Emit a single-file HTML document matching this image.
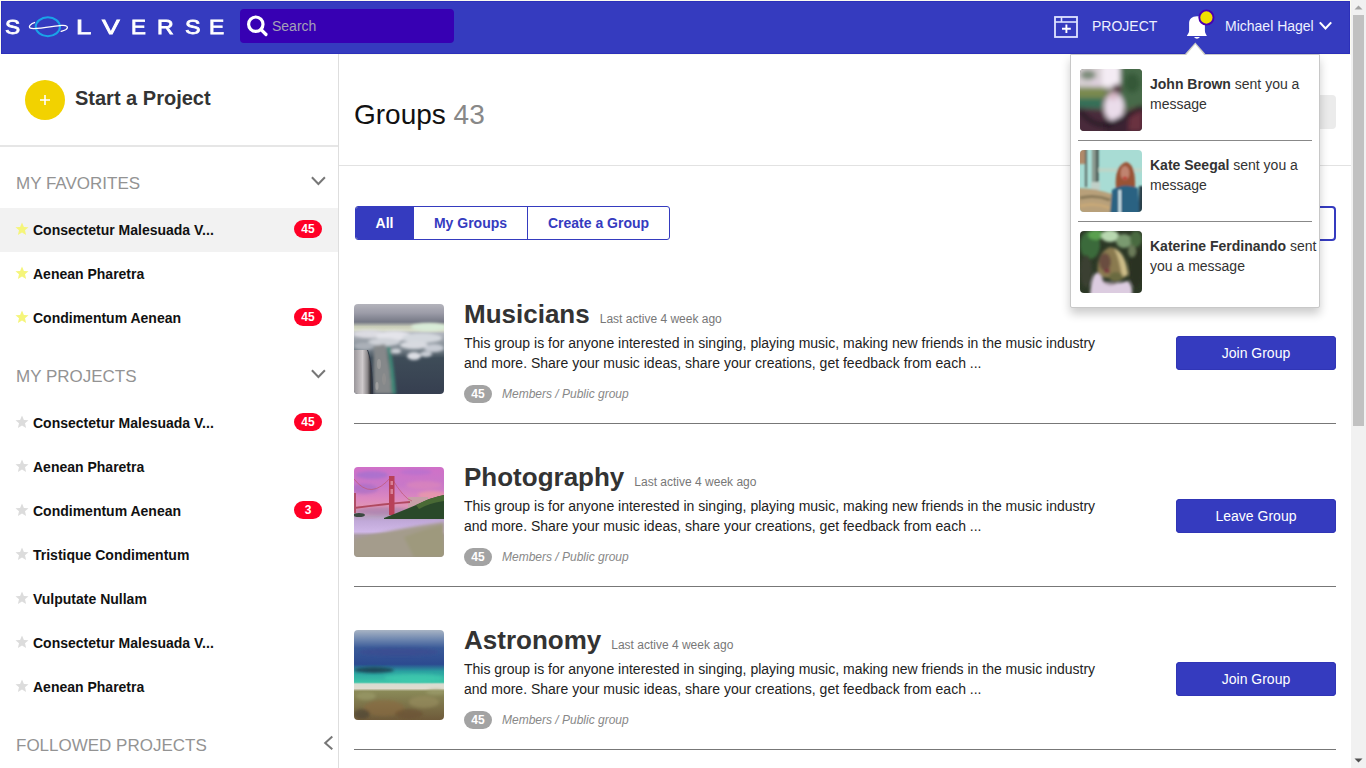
<!DOCTYPE html>
<html><head><meta charset="utf-8">
<style>
*{box-sizing:border-box;margin:0;padding:0}
html,body{width:1366px;height:768px;overflow:hidden;background:#fff;font-family:"Liberation Sans",sans-serif}
.abs{position:absolute}
#page{position:absolute;left:0;top:0;width:1351px;height:768px;background:#fff}
#hdr{position:absolute;left:1px;top:1px;width:1349px;height:53px;background:#353bbf;box-shadow:inset 0 0 0 1px #2c30ba,0 0 0 1px #fbfbf0}
.lg{position:absolute;top:11px;color:#fff;font-size:21px;line-height:30px;-webkit-text-stroke:0.8px #fff;transform-origin:0 0}
#search{position:absolute;left:239px;top:8px;width:214px;height:34px;background:#3700b3;border-radius:4px}
#search span{position:absolute;left:32px;top:9px;font-size:14px;color:#a4a2b6;line-height:16px}
#side{position:absolute;left:0;top:54px;width:339px;height:714px;border-right:1px solid #dedede;background:#fff}
.sect{position:absolute;left:16px;font-size:17px;color:#939393;line-height:20px}
.it{position:absolute;left:0;width:338px;height:44px}
.it .t{position:absolute;left:33px;top:14px;font-size:14px;font-weight:bold;color:#111;line-height:16px}
.it .st{position:absolute;left:15px;top:14px}
.bd{position:absolute;left:294px;top:12px;width:28px;height:18px;border-radius:9px;background:#ff0026;color:#fff;font-size:12px;font-weight:bold;text-align:center;line-height:18px}
#main{position:absolute;left:339px;top:54px;width:1012px;height:714px}
.grp{position:absolute;left:354px;width:982px;height:120px}
.img{position:absolute;left:0;top:0;width:90px;height:90px;border-radius:4px;overflow:hidden}
.gt{position:absolute;left:110px;font-size:26px;font-weight:bold;color:#333;line-height:30px;white-space:nowrap}
.gt small{font-size:12px;font-weight:normal;color:#777;margin-left:10px}
.gd{position:absolute;left:110px;top:29px;font-size:14px;color:#222;line-height:20px;width:645px}
.gb{position:absolute;left:110px;top:81px;width:28px;height:18px;border-radius:9px;background:#a3a3a3;color:#fff;font-size:12px;font-weight:bold;text-align:center;line-height:18px}
.gm{position:absolute;left:148px;top:82px;font-size:12px;font-style:italic;color:#888;line-height:16px}
.btn{position:absolute;left:822px;top:32px;width:160px;height:34px;background:#353bbf;border-radius:4px;box-shadow:inset 0 0 0 1px #3035b6;color:#fff;font-size:14px;text-align:center;line-height:34px}
.hr{position:absolute;left:354px;width:982px;height:1px;background:#777}
#pop{position:absolute;left:1070px;top:54px;width:250px;height:254px;background:#fff;border:1px solid #c8c8c8;border-radius:0 0 2px 2px;box-shadow:0 6px 10px rgba(0,0,0,.2)}
.pi{position:absolute;left:9px;width:240px;height:80px}
.pi .av{position:absolute;left:0;top:0;width:62px;height:62px;border-radius:4px;overflow:hidden}
.pi .tx{position:absolute;left:70px;top:5px;width:170px;font-size:14px;color:#333;line-height:20px}
.pi .tx b{color:#333}
.phr{position:absolute;left:7px;width:234px;height:1px;background:#888}
#sb{position:absolute;left:1351px;top:0;width:15px;height:768px;background:#f1f1f1}
</style></head>
<body>
<div id="page"></div>
<div id="hdr">
 <div class="lg" style="left:4.3px;transform:scaleX(1.085)">S</div>
 <svg class="abs" style="left:26px;top:14px" width="44" height="26" viewBox="0 0 44 26">
  <ellipse cx="20.85" cy="11.75" rx="12.1" ry="9.4" fill="none" stroke="#1aa3e8" stroke-width="2"/>
  <path d="M8.1 7.3 C4 8.5, 0.8 11.5, 3.3 13.2 C8 15, 27 11, 34.5 10.4 C40 10, 42 12, 39 14.5 C37.5 15.5, 35 16, 33.6 16.5" fill="none" stroke="#fff" stroke-width="1.3"/>
 </svg>
 <div class="lg" style="left:75.0px;transform:scaleX(1.305)">L</div>
 <div class="lg" style="left:101.4px;transform:scaleX(1.264)">V</div>
 <div class="lg" style="left:129.7px;transform:scaleX(1.063)">E</div>
 <div class="lg" style="left:155.9px;transform:scaleX(1.103)">R</div>
 <div class="lg" style="left:183.6px;transform:scaleX(1.107)">S</div>
 <div class="lg" style="left:208.4px;transform:scaleX(1.085)">E</div>
 <div id="search">
  <svg class="abs" style="left:5px;top:5px" width="24" height="24" viewBox="0 0 24 24">
   <circle cx="10.8" cy="10.2" r="7.2" fill="none" stroke="#fff" stroke-width="3.2"/>
   <path d="M16 15.5 L21 20.5" stroke="#fff" stroke-width="3.2" stroke-linecap="round"/>
  </svg>
  <span>Search</span>
 </div>
 <svg class="abs" style="left:1052px;top:14px" width="26" height="25" viewBox="0 0 26 25">
  <rect x="2" y="2" width="22" height="20" fill="none" stroke="#dfe4ff" stroke-width="1.8"/>
  <path d="M2 7 H24" stroke="#dfe4ff" stroke-width="1.6"/>
  <path d="M8.5 2 V7" stroke="#dfe4ff" stroke-width="1.6"/>
  <path d="M13.4 9.5 V18 M9 13.8 H17.8" stroke="#fff" stroke-width="1.9"/>
 </svg>
 <div class="abs" style="left:1091px;top:17px;font-size:14px;color:#eef0ff;line-height:16px">PROJECT</div>
 <svg class="abs" style="left:1184px;top:8px" width="32" height="34" viewBox="0 0 32 34">
  <path d="M12 7.2 C6.8 7.2, 4.1 10.2, 4.1 14.5 L4.1 21.5 C4.1 24, 2.6 25.3, 1.8 27 L21.9 27 C21.1 25.3, 19.9 24, 19.9 21.5 L19.9 14.5 C19.9 10.2, 17.2 7.2, 12 7.2 Z" fill="#fff"/>
  <path d="M8.9 28 Q11.9 31.5 15 28 Z" fill="#fff"/>
  <circle cx="21.4" cy="8.5" r="7.1" fill="#f0e000" stroke="#4a00b0" stroke-width="1.9"/>
 </svg>
 <div class="abs" style="left:1224px;top:17px;font-size:14px;color:#eef0ff;line-height:16px">Michael Hagel</div>
 <svg class="abs" style="left:1317px;top:19px" width="16" height="12" viewBox="0 0 16 12">
  <path d="M1.8 2.4 L7.5 8.5 L13.2 2.4" fill="none" stroke="#fff" stroke-width="2.1"/>
 </svg>
</div>

<div id="side">
 <div class="abs" style="left:25px;top:26px;width:40px;height:40px;border-radius:20px;background:#f2d200"></div>
 <svg class="abs" style="left:39px;top:40px" width="12" height="12" viewBox="0 0 12 12"><path d="M6 1 V11 M1 6 H11" stroke="#fff" stroke-width="1.6"/></svg>
 <div class="abs" style="left:75px;top:32px;font-size:20px;font-weight:bold;color:#333;line-height:24px">Start a Project</div>
 <div class="abs" style="left:0;top:91px;width:338px;height:2px;background:#e6e6e6"></div>

 <div class="sect" style="top:120px">MY FAVORITES</div>
 <svg class="abs" style="left:310px;top:120px" width="18" height="14" viewBox="0 0 18 14"><path d="M1.9 3.2 L8.4 10 L14.9 3.2" fill="none" stroke="#777" stroke-width="2"/></svg>

 <div class="it" style="top:154px;background:#f2f2f2"><svg class="st" width="14" height="14" viewBox="0 0 14 14"><path d="M7 0.5 L8.9 4.9 L13.5 5.2 L10 8.3 L11.1 13 L7 10.5 L2.9 13 L4 8.3 L0.5 5.2 L5.1 4.9 Z" fill="#f5f57a"/></svg><div class="t">Consectetur Malesuada V...</div><div class="bd">45</div></div>
 <div class="it" style="top:198px"><svg class="st" width="14" height="14" viewBox="0 0 14 14"><path d="M7 0.5 L8.9 4.9 L13.5 5.2 L10 8.3 L11.1 13 L7 10.5 L2.9 13 L4 8.3 L0.5 5.2 L5.1 4.9 Z" fill="#f5f57a"/></svg><div class="t">Aenean Pharetra</div></div>
 <div class="it" style="top:242px"><svg class="st" width="14" height="14" viewBox="0 0 14 14"><path d="M7 0.5 L8.9 4.9 L13.5 5.2 L10 8.3 L11.1 13 L7 10.5 L2.9 13 L4 8.3 L0.5 5.2 L5.1 4.9 Z" fill="#f5f57a"/></svg><div class="t">Condimentum Aenean</div><div class="bd">45</div></div>

 <div class="sect" style="top:313px">MY PROJECTS</div>
 <svg class="abs" style="left:310px;top:313px" width="18" height="14" viewBox="0 0 18 14"><path d="M1.9 3.2 L8.4 10 L14.9 3.2" fill="none" stroke="#777" stroke-width="2"/></svg>

 <div class="it" style="top:347px"><svg class="st" width="14" height="14" viewBox="0 0 14 14"><path d="M7 0.5 L8.9 4.9 L13.5 5.2 L10 8.3 L11.1 13 L7 10.5 L2.9 13 L4 8.3 L0.5 5.2 L5.1 4.9 Z" fill="#dcdcdc"/></svg><div class="t">Consectetur Malesuada V...</div><div class="bd">45</div></div>
 <div class="it" style="top:391px"><svg class="st" width="14" height="14" viewBox="0 0 14 14"><path d="M7 0.5 L8.9 4.9 L13.5 5.2 L10 8.3 L11.1 13 L7 10.5 L2.9 13 L4 8.3 L0.5 5.2 L5.1 4.9 Z" fill="#dcdcdc"/></svg><div class="t">Aenean Pharetra</div></div>
 <div class="it" style="top:435px"><svg class="st" width="14" height="14" viewBox="0 0 14 14"><path d="M7 0.5 L8.9 4.9 L13.5 5.2 L10 8.3 L11.1 13 L7 10.5 L2.9 13 L4 8.3 L0.5 5.2 L5.1 4.9 Z" fill="#dcdcdc"/></svg><div class="t">Condimentum Aenean</div><div class="bd">3</div></div>
 <div class="it" style="top:479px"><svg class="st" width="14" height="14" viewBox="0 0 14 14"><path d="M7 0.5 L8.9 4.9 L13.5 5.2 L10 8.3 L11.1 13 L7 10.5 L2.9 13 L4 8.3 L0.5 5.2 L5.1 4.9 Z" fill="#dcdcdc"/></svg><div class="t">Tristique Condimentum</div></div>
 <div class="it" style="top:523px"><svg class="st" width="14" height="14" viewBox="0 0 14 14"><path d="M7 0.5 L8.9 4.9 L13.5 5.2 L10 8.3 L11.1 13 L7 10.5 L2.9 13 L4 8.3 L0.5 5.2 L5.1 4.9 Z" fill="#dcdcdc"/></svg><div class="t">Vulputate Nullam</div></div>
 <div class="it" style="top:567px"><svg class="st" width="14" height="14" viewBox="0 0 14 14"><path d="M7 0.5 L8.9 4.9 L13.5 5.2 L10 8.3 L11.1 13 L7 10.5 L2.9 13 L4 8.3 L0.5 5.2 L5.1 4.9 Z" fill="#dcdcdc"/></svg><div class="t">Consectetur Malesuada V...</div></div>
 <div class="it" style="top:611px"><svg class="st" width="14" height="14" viewBox="0 0 14 14"><path d="M7 0.5 L8.9 4.9 L13.5 5.2 L10 8.3 L11.1 13 L7 10.5 L2.9 13 L4 8.3 L0.5 5.2 L5.1 4.9 Z" fill="#dcdcdc"/></svg><div class="t">Aenean Pharetra</div></div>

 <div class="sect" style="top:682px">FOLLOWED PROJECTS</div>
 <svg class="abs" style="left:320px;top:680px" width="16" height="18" viewBox="0 0 16 18"><path d="M12.3 2.5 L5.2 9 L12.3 15.3" fill="none" stroke="#777" stroke-width="2"/></svg>
</div>

<div class="abs" style="left:339px;top:165px;width:1012px;height:1px;background:#e2e2e2"></div>
<div class="abs" style="left:354px;top:100px;font-size:28px;color:#111;line-height:30px">Groups <span style="color:#888">43</span></div>
<div class="abs" style="left:1270px;top:95px;width:66px;height:34px;border-radius:4px;background:#ebebeb"></div>
<div class="abs" style="left:1100px;top:206px;width:236px;height:35px;border-radius:4px;border:2px solid #353bbf"></div>

<div class="abs" style="left:355px;top:206px;height:34px;width:315px;border:1px solid #353bbf;border-radius:3px;overflow:hidden;font-size:14px;font-weight:bold;color:#353bbf;line-height:32px">
 <div class="abs" style="left:-1px;top:-1px;width:59px;height:34px;background:#353bbf;color:#fff;text-align:center;border:1px solid #6a6a8a;border-right:0;border-radius:3px 0 0 3px;line-height:32px;padding-right:1px">All</div>
 <div class="abs" style="left:58px;top:0;width:113px;height:32px;text-align:center">My Groups</div>
 <div class="abs" style="left:171px;top:0;width:1px;height:32px;background:#353bbf"></div>
 <div class="abs" style="left:171px;top:0;width:143px;height:32px;text-align:center">Create a Group</div>
</div>

<div class="grp" style="top:304px">
 <div class="img" id="img1"><svg width="90" height="90" viewBox="0 0 90 90"><defs><linearGradient id="s1" x1="0" y1="0" x2="0" y2="1"><stop offset="0" stop-color="#b4b4bc"/><stop offset="0.1" stop-color="#9c9ca8"/><stop offset="0.2" stop-color="#757885"/><stop offset="0.25" stop-color="#c8ccb8"/><stop offset="0.29" stop-color="#d8dcc8"/><stop offset="0.33" stop-color="#b0b4bc"/><stop offset="0.5" stop-color="#7a848c"/><stop offset="0.6" stop-color="#3e4c58"/><stop offset="1" stop-color="#363f50"/></linearGradient>
<linearGradient id="w1" x1="0" y1="0" x2="1" y2="0"><stop offset="0" stop-color="#9a969a"/><stop offset="0.5" stop-color="#cfcacc"/><stop offset="0.8" stop-color="#8a8688"/><stop offset="1" stop-color="#2a2a2e"/></linearGradient>
<filter id="b1" x="-20%" y="-20%" width="140%" height="140%"><feGaussianBlur stdDeviation="1.6"/></filter><filter id="b1b"><feGaussianBlur stdDeviation="0.6"/></filter></defs>
<rect width="90" height="90" fill="url(#s1)"/>
<g filter="url(#b1)"><ellipse cx="75" cy="23" rx="18" ry="4" fill="#d8ecd8"/><ellipse cx="15" cy="30" rx="16" ry="4" fill="#dcdce2"/><ellipse cx="40" cy="32" rx="18" ry="5" fill="#e4e4ea"/><ellipse cx="68" cy="34" rx="20" ry="5" fill="#d4d8de"/>
<ellipse cx="30" cy="38" rx="16" ry="4" fill="#cfd2d8"/><ellipse cx="60" cy="41" rx="14" ry="4" fill="#d8dae0"/><ellipse cx="80" cy="44" rx="10" ry="4" fill="#c8ccd4"/><ellipse cx="10" cy="42" rx="10" ry="4" fill="#aab0b8"/>
<ellipse cx="60" cy="52" rx="7" ry="4" fill="#dcdee4"/><ellipse cx="72" cy="50" rx="6" ry="3" fill="#c8ccd4"/><ellipse cx="42" cy="47" rx="5" ry="2.5" fill="#d0d4da"/>
<path d="M20 42 L31 40 Q36 60 38 90 L20 90 Q19 60 20 42 Z" fill="#85888a"/><path d="M33 42 L36 43 Q40 62 42 90 L38 90 Q36 60 33 42 Z" fill="#3c8a78"/></g>
<g filter="url(#b1b)"><ellipse cx="25" cy="60" rx="2" ry="5" fill="#9a9a9a"/><ellipse cx="30" cy="75" rx="2" ry="6" fill="#8e8e8e"/><ellipse cx="23" cy="82" rx="1.5" ry="4" fill="#a0a0a0"/><path d="M14 46 Q19 60 19 90 L17 90 Q17 60 13 46 Z" fill="#2e3440"/>
<path d="M0 46 L13 46 Q17 56 17 72 L17 90 L0 90 Z" fill="url(#w1)"/></g></svg></div>
 <div class="gt" style="top:-5px">Musicians<small>Last active 4 week ago</small></div>
 <div class="gd">This group is for anyone interested in singing, playing music, making new friends in the music industry and more. Share your music ideas, share your creations, get feedback from each ...</div>
 <div class="gb">45</div>
 <div class="gm">Members / Public group</div>
 <div class="btn">Join Group</div>
</div>
<div class="hr" style="top:423px"></div>
<div class="grp" style="top:467px">
 <div class="img" id="img2"><svg width="90" height="90" viewBox="0 0 90 90"><defs><linearGradient id="s2" x1="0" y1="0" x2="0" y2="1"><stop offset="0" stop-color="#d070c8"/><stop offset="0.2" stop-color="#c878c8"/><stop offset="0.35" stop-color="#dc88c0"/><stop offset="0.48" stop-color="#e49ab0"/><stop offset="0.55" stop-color="#b8a0c0"/><stop offset="0.6" stop-color="#c0a8d8"/><stop offset="0.72" stop-color="#d0b8e8"/><stop offset="0.76" stop-color="#a89aa0"/><stop offset="1" stop-color="#9c9484"/></linearGradient>
<filter id="b2" x="-20%" y="-20%" width="140%" height="140%"><feGaussianBlur stdDeviation="1.4"/></filter><filter id="b2b"><feGaussianBlur stdDeviation="0.5"/></filter></defs>
<rect width="90" height="90" fill="url(#s2)"/>
<g filter="url(#b2)"><ellipse cx="18" cy="8" rx="16" ry="4" fill="#a070d0" opacity="0.7"/><ellipse cx="62" cy="5" rx="16" ry="3" fill="#b070d0" opacity="0.6"/><ellipse cx="10" cy="22" rx="14" ry="5" fill="#9a68c8" opacity="0.5"/><ellipse cx="70" cy="18" rx="18" ry="4" fill="#e088b8" opacity="0.6"/><ellipse cx="78" cy="28" rx="14" ry="4" fill="#f0a0a0" opacity="0.6"/>
<ellipse cx="30" cy="44" rx="30" ry="4" fill="#9a7ab0" opacity="0.6"/>
<path d="M0 72 Q40 62 90 55 L90 90 L0 90 Z" fill="#a49c8c"/><path d="M50 70 Q70 62 90 58 L90 90 L60 90 Z" fill="#98966e" opacity="0.5"/></g>
<g filter="url(#b2b)"><rect x="54" y="30" width="20" height="12" fill="#c8a0a8"/>
<path d="M0 41 Q30 37 56 35" fill="none" stroke="#b04a60" stroke-width="1.8"/>
<path d="M0 12 Q17 34 37 10 Q50 32 58 34" fill="none" stroke="#c05870" stroke-width="0.7"/>
<rect x="35" y="9" width="5.5" height="39" fill="#b84058"/><rect x="36.5" y="14" width="2.5" height="4" fill="#d88098"/><rect x="36.5" y="22" width="2.5" height="5" fill="#d88098"/><rect x="0" y="26" width="2" height="20" fill="#b05068"/>
<path d="M30 51 Q48 44 62 38 Q78 30 90 28 L90 52 L30 52 Z" fill="#2c4a2c"/><path d="M62 38 Q78 30 90 28 L90 34 Q75 36 65 42 Z" fill="#4a6a34"/><ellipse cx="5" cy="48" rx="6" ry="2" fill="#3a4a40"/></g></svg></div>
 <div class="gt" style="top:-5px">Photography<small>Last active 4 week ago</small></div>
 <div class="gd">This group is for anyone interested in singing, playing music, making new friends in the music industry and more. Share your music ideas, share your creations, get feedback from each ...</div>
 <div class="gb">45</div>
 <div class="gm">Members / Public group</div>
 <div class="btn">Leave Group</div>
</div>
<div class="hr" style="top:586px"></div>
<div class="grp" style="top:630px">
 <div class="img" id="img3"><svg width="90" height="90" viewBox="0 0 90 90"><defs><linearGradient id="s3" x1="0" y1="0" x2="0" y2="1"><stop offset="0" stop-color="#a8b4c4"/><stop offset="0.1" stop-color="#7088b0"/><stop offset="0.2" stop-color="#3a5a98"/><stop offset="0.38" stop-color="#2c4a90"/><stop offset="0.46" stop-color="#2aa0a0"/><stop offset="0.58" stop-color="#3cc4a8"/><stop offset="0.6" stop-color="#d8dcd0"/><stop offset="0.65" stop-color="#e0dcd0"/><stop offset="0.68" stop-color="#8a8a58"/><stop offset="1" stop-color="#6e5a3a"/></linearGradient><filter id="b3"><feGaussianBlur stdDeviation="1.5"/></filter></defs>
<rect width="90" height="90" fill="url(#s3)"/>
<g filter="url(#b3)"><ellipse cx="45" cy="22" rx="40" ry="4" fill="#3a4890" opacity="0.6"/><ellipse cx="20" cy="40" rx="20" ry="3" fill="#1e4a5a"/><ellipse cx="60" cy="48" rx="30" ry="4" fill="#40d0b0" opacity="0.6"/><ellipse cx="12" cy="66" rx="10" ry="4" fill="#9a9a6a" opacity="0.7"/><ellipse cx="30" cy="78" rx="20" ry="8" fill="#8a6a40" opacity="0.6"/><ellipse cx="70" cy="72" rx="15" ry="6" fill="#9a9060" opacity="0.6"/><ellipse cx="55" cy="84" rx="14" ry="5" fill="#6a5030" opacity="0.6"/><ellipse cx="8" cy="84" rx="8" ry="5" fill="#4a4030" opacity="0.6"/><ellipse cx="82" cy="62" rx="10" ry="3" fill="#a0a070" opacity="0.6"/></g></svg></div>
 <div class="gt" style="top:-5px">Astronomy<small>Last active 4 week ago</small></div>
 <div class="gd">This group is for anyone interested in singing, playing music, making new friends in the music industry and more. Share your music ideas, share your creations, get feedback from each ...</div>
 <div class="gb">45</div>
 <div class="gm">Members / Public group</div>
 <div class="btn">Join Group</div>
</div>
<div class="hr" style="top:749px"></div>


<div id="sb">
 <svg class="abs" style="left:0;top:0" width="15" height="15"><path d="M3.5 9.5 L7.5 5.5 L11.5 9.5 Z" fill="#a3a3a3"/></svg>
 <div class="abs" style="left:2px;top:15px;width:11px;height:411px;background:#c1c1c1"></div>
 <svg class="abs" style="left:0;top:753px" width="15" height="15"><path d="M3.5 5.5 L7.5 9.5 L11.5 5.5 Z" fill="#505050"/></svg>
</div>

<div id="pop">
 <div class="pi" style="top:14px"><div class="av" id="av1"><svg width="62" height="62" viewBox="0 0 62 62"><defs><filter id="b4" x="-20%" y="-20%" width="140%" height="140%"><feGaussianBlur stdDeviation="2.8"/></filter></defs><rect width="62" height="62" fill="#5a5a50"/>
<g filter="url(#b4)"><rect x="-5" y="-5" width="45" height="25" fill="#d8d0d4"/><rect x="22" y="-5" width="18" height="22" fill="#f4ecf4"/><ellipse cx="8" cy="6" rx="8" ry="5" fill="#7a8a78"/><ellipse cx="16" cy="14" rx="6" ry="3" fill="#e0d0e0"/>
<rect x="40" y="-5" width="27" height="45" fill="#466a4a"/><ellipse cx="52" cy="14" rx="8" ry="10" fill="#355838"/>
<rect x="-5" y="18" width="30" height="11" fill="#7a8a50"/><rect x="-5" y="29" width="28" height="10" fill="#357058"/><ellipse cx="30" cy="26" rx="6" ry="5" fill="#6a7a48"/>
<path d="M-5 38 Q10 40 25 42 L25 67 L-5 67 Z" fill="#4a2a3a"/><path d="M25 50 Q45 45 67 36 L67 67 L25 67 Z" fill="#3a2432"/><path d="M50 40 L62 36 L62 62 L48 62 Z" fill="#6a3040"/>
<ellipse cx="34" cy="38" rx="10" ry="14" fill="#eadcea"/><circle cx="37" cy="20" r="5" fill="#5a4048"/><ellipse cx="33" cy="27" rx="5" ry="4" fill="#d8b8c8"/>
<path d="M0 42 Q15 60 30 55 Q45 48 62 38" fill="none" stroke="#1e1820" stroke-width="4"/></g></svg></div><div class="tx"><b>John Brown</b> sent you a message</div></div>
<div class="phr" style="top:85px"></div>
<div class="pi" style="top:95px"><div class="av" id="av2"><svg width="62" height="62" viewBox="0 0 62 62"><defs><filter id="b5" x="-20%" y="-20%" width="140%" height="140%"><feGaussianBlur stdDeviation="1"/></filter></defs><rect width="62" height="62" fill="#a8dcd4"/>
<g filter="url(#b5)"><rect x="-3" y="-3" width="10" height="17" fill="#b08a6a"/><rect x="5" y="-3" width="2" height="40" fill="#5a6a64"/><rect x="12" y="-3" width="6" height="38" fill="#8a9a90"/><rect x="16" y="-3" width="2.5" height="36" fill="#3e4e48"/><rect x="11" y="32" width="9" height="8" fill="#c0d0c8"/>
<rect x="18" y="18" width="44" height="4" fill="#c8d0c0" opacity="0.6"/>
<path d="M-3 38 Q15 38 32 44 L32 65 L-3 65 Z" fill="#b8a07a"/><path d="M0 48 Q15 44 30 50" fill="none" stroke="#8a7a5a" stroke-width="3"/><path d="M0 56 Q15 52 30 58" fill="none" stroke="#c8a878" stroke-width="3"/>
<path d="M36 38 Q34 16 46 12 Q56 14 55 38 Z" fill="#9a5236"/><ellipse cx="45" cy="23" rx="4.5" ry="7" fill="#c08470"/><ellipse cx="45" cy="28" rx="2" ry="1.2" fill="#c02020"/>
<path d="M30 65 L32 40 Q44 32 58 38 L60 65 Z" fill="#2a6282"/><rect x="38.5" y="40" width="2.5" height="25" fill="#d8ecf0"/><rect x="59" y="36" width="6" height="30" fill="#2a4048"/></g></svg></div><div class="tx"><b>Kate Seegal</b> sent you a message</div></div>
<div class="phr" style="top:166px"></div>
<div class="pi" style="top:176px"><div class="av" id="av3"><svg width="62" height="62" viewBox="0 0 62 62"><defs><filter id="b6" x="-20%" y="-20%" width="140%" height="140%"><feGaussianBlur stdDeviation="1.6"/></filter></defs><rect width="62" height="62" fill="#2c3826"/>
<g filter="url(#b6)"><ellipse cx="10" cy="14" rx="10" ry="14" fill="#3a6a3a"/><ellipse cx="16" cy="4" rx="8" ry="5" fill="#5aa050"/><ellipse cx="30" cy="5" rx="9" ry="6" fill="#b8d8b0"/><ellipse cx="44" cy="10" rx="8" ry="7" fill="#7a9a70"/><ellipse cx="56" cy="8" rx="6" ry="8" fill="#4a6a40"/>
<ellipse cx="6" cy="40" rx="6" ry="16" fill="#3a4030"/><ellipse cx="56" cy="36" rx="7" ry="20" fill="#2a3020"/><ellipse cx="52" cy="20" rx="4" ry="6" fill="#6a7a58"/>
<path d="M18 46 Q15 22 30 16 Q44 17 48 44 L42 48 Z" fill="#8a7a50"/><path d="M34 17 Q46 22 48 44 L42 46 Q40 28 34 17 Z" fill="#cdbd88"/><ellipse cx="25" cy="31" rx="6" ry="9" fill="#6a4e40"/><ellipse cx="27" cy="40" rx="3" ry="2" fill="#7a3040"/><ellipse cx="36" cy="46" rx="7" ry="5" fill="#6a6a40"/>
<path d="M10 65 Q11 46 16 42 Q21 42 23 50 Q36 54 48 50 Q53 54 52 65 Z" fill="#dccce0"/><path d="M23 50 Q30 56 36 52" fill="none" stroke="#8a7880" stroke-width="1.5"/></g></svg></div><div class="tx"><b>Katerine Ferdinando</b> sent you a message</div></div>

</div>
<svg class="abs" style="left:1184px;top:41px" width="22" height="14" viewBox="0 0 22 14"><path d="M0.8 13.2 L11.3 1.6 L21.6 13.2 Z" fill="#cfcfc4"/><path d="M2.2 14 L11.3 3.2 L20.3 14 Z" fill="#fff"/></svg>
</body></html>
